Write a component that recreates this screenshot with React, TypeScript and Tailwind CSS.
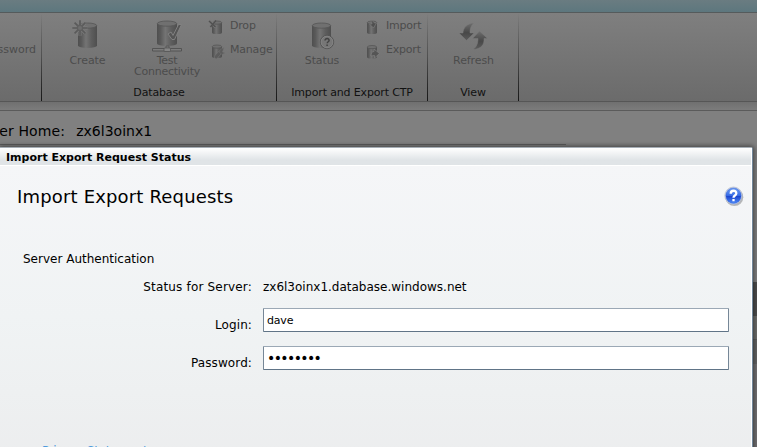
import React from "react";

type IconProps = { className?: string };

function IconGradients() {
  return (
    <svg width="0" height="0" className="absolute">
      <defs>
        <linearGradient id="disk" x1="0" x2="1" y1="0" y2="0">
          <stop offset="0" stopColor="#4f4f4f" />
          <stop offset="0.18" stopColor="#5a5a5a" />
          <stop offset="0.42" stopColor="#747474" />
          <stop offset="0.7" stopColor="#5e5e5e" />
          <stop offset="1" stopColor="#4f4f4f" />
        </linearGradient>
        <linearGradient id="arrow" x1="0" x2="0" y1="0" y2="1">
          <stop offset="0" stopColor="#6e6e6e" />
          <stop offset="0.55" stopColor="#484848" />
          <stop offset="1" stopColor="#5c5c5c" />
        </linearGradient>
        <linearGradient id="help" x1="0" x2="0" y1="0" y2="1">
          <stop offset="0" stopColor="#6c9cf2" />
          <stop offset="0.48" stopColor="#3a6ee6" />
          <stop offset="0.55" stopColor="#1c46cf" />
          <stop offset="1" stopColor="#4f8cf8" />
        </linearGradient>
      </defs>
    </svg>
  );
}

function Disk({ x, y, w, h, r }: { x: number; y: number; w: number; h: number; r: number }) {
  const rx = w / 2;
  return (
    <g>
      <path
        d={`M${x} ${y + r}v${h - 2 * r}a${rx} ${r} 0 0 0 ${w} 0v${-(h - 2 * r)}z`}
        fill="url(#disk)"
      />
      <ellipse cx={x + rx} cy={y + r} rx={rx - 0.3} ry={r} fill="#707070" stroke="#565656" strokeWidth="0.8" />
    </g>
  );
}

function CreateIcon({ className }: IconProps) {
  return (
    <svg className={className} width="32" height="32" viewBox="0 0 32 32">
      <Disk x={6} y={3} w={19} h={25} r={2.6} />
      <path d="M8 .3v15.400M.3 8h15.400M2.600 2.600l10.800 10.800M13.400 2.600L2.600 13.400" stroke="#7e7e7e" strokeWidth="3" fill="none" />
      <path d="M8 .3v15.400M.3 8h15.400M2.600 2.600l10.800 10.800M13.400 2.600L2.600 13.400" stroke="#5a5a5a" strokeWidth="1.700" fill="none" />
      <circle cx="8" cy="8" r="3.400" fill="#5f5f5f" />
      <circle cx="8" cy="8" r="2" fill="#6e6e6e" />
    </svg>
  );
}

function TestIcon({ className }: IconProps) {
  return (
    <svg className={className} width="32" height="34" viewBox="0 0 32 34">
      <Disk x={6} y={2} w={20} h={25} r={2.6} />
      <path d="M15 27h3v3h-3z" fill="#777" stroke="#505050" strokeWidth="0.7" />
      <path d="M1.500 29.500h29v2.500h-29z" fill="#7c7c7c" stroke="#505050" strokeWidth="0.9" />
      <rect x="13" y="29" width="6.500" height="3.500" rx="1" fill="#858585" stroke="#505050" strokeWidth="0.7" />
      <path d="M17 15l3-2 2 3.500L27.500 5.500h3L23.500 20.500h-2.500z" fill="#555" stroke="#858585" strokeWidth="0.9" />
    </svg>
  );
}

function StatusIcon({ className }: IconProps) {
  return (
    <svg className={className} width="32" height="32" viewBox="0 0 32 32">
      <Disk x={6} y={3} w={19} h={25} r={2.6} />
      <circle cx="21" cy="22" r="6.700" fill="#777" stroke="#4e4e4e" strokeWidth="0.8" />
      <circle cx="21" cy="22" r="5.800" fill="none" stroke="#858585" strokeWidth="0.8" />
      <path d="M19 20.600c0-2.800 4.300-2.600 4.100-.1-.1 1.300-1.900 1.300-1.900 2.800M21.100 24.500v1.400" fill="none" stroke="#424242" strokeWidth="1.500" />
    </svg>
  );
}

function RefreshIcon({ className }: IconProps) {
  return (
    <svg className={className} width="32" height="32" viewBox="0 0 32 32">
      <path d="M16 3C9 3.500 5 8 5 13H1L8.500 20.500 16 13H12C12 9 12.500 6 16 3z" fill="url(#arrow)" stroke="#7d7d7d" strokeWidth="0.500" />
      <path d="M15 29.500C23 29 26.500 25 26 18.500H29.500L21.500 11 14.500 18.500H20C20 23 19 26.500 15 29.500z" fill="url(#arrow)" stroke="#7d7d7d" strokeWidth="0.500" />
    </svg>
  );
}

type SmallKind = "drop" | "manage" | "import" | "export";

function SmallIcon({ kind }: { kind: SmallKind }) {
  return (
    <svg className="shrink-0 overflow-visible" width="16" height="16" viewBox="0 0 16 16">
      {kind === "drop" && (
        <>
          <Disk x={4} y={1} w={10} h={13} r={1.6} />
          <path d="M1.500 .5l6 7M7.500 .5L2 7" stroke="#787878" strokeWidth="2.400" fill="none" />
          <path d="M1 1l6.500 6M8 .5L2.500 7" stroke="#505050" strokeWidth="1.400" fill="none" />
        </>
      )}
      {kind === "manage" && (
        <>
          <Disk x={4} y={1} w={10} h={13} r={1.6} />
          <path d="M12 8.500L8 13" stroke="#747474" strokeWidth="4" strokeLinecap="round" fill="none" />
          <path d="M12 8.500L8 13" stroke="#5c5c5c" strokeWidth="3" strokeLinecap="round" fill="none" />
          <path d="M16 3.500l-4 2-.5 3 2.500 2 3-1.500-2.500-1z" fill="#5c5c5c" stroke="#747474" strokeWidth="0.500" />
        </>
      )}
      {kind === "import" && (
        <>
          <Disk x={3} y={1} w={10} h={13} r={1.600} />
          <path d="M4 0c3 0 4 2 4 4H5.500l4 4 3-5h-2C10 1.500 7-.5 4 0z" fill="#505050" stroke="#828282" strokeWidth="0.600" />
        </>
      )}
      {kind === "export" && (
        <>
          <Disk x={3} y={1.500} w={10} h={13} r={1.600} />
          <path d="M7 12c0-3 1-4.500 3-4.500V5l5.500 4.500-5 4.500v-2.500C9 11.500 8 12 7 12z" fill="#555" stroke="#828282" strokeWidth="0.700" />
        </>
      )}
    </svg>
  );
}

function HelpIcon() {
  return (
    <svg width="20" height="21" viewBox="0 0 20 21">
      <circle cx="10.400" cy="11.200" r="8.900" fill="#9b9c9e" opacity="0.700" />
      <circle cx="9.500" cy="9.700" r="8.700" fill="#dce4f4" stroke="#9ba3b4" strokeWidth="0.500" />
      <circle cx="9.500" cy="9.700" r="7.700" fill="url(#help)" stroke="#3560d4" strokeWidth="0.500" />
      <path d="M6.700 7.800c0-4.100 5.800-3.900 5.600-.3-.1 2.100-2.800 2-2.800 4.200M9.500 13v2.300" fill="none" stroke="#fff" strokeWidth="2.300" />
    </svg>
  );
}

function Separator() {
  return <div className="h-[88px] w-px shrink-0 bg-linear-to-b from-transparent via-[#505050] to-[#171717]" />;
}

function GroupLabel({ children }: { children: React.ReactNode }) {
  return <div className="h-4 text-center text-[11px] leading-4 tracking-[-0.15px] text-[#111]">{children}</div>;
}

function SmallCommand({ kind, label }: { kind: SmallKind; label: string }) {
  return (
    <div className="flex h-6 items-start gap-[6px]">
      <SmallIcon kind={kind} />
      <span className="-mt-[2px] leading-4 tracking-[-0.2px]">{label}</span>
    </div>
  );
}

function Ribbon() {
  return (
    <div className="flex h-[89px] border-b border-[#565656] bg-linear-to-b from-[#7f7f7f] to-[#6b6b6b] text-[11px] whitespace-nowrap text-[#4c4c4c]">
      <div className="flex w-[41px] shrink-0 justify-end pt-7 pr-[5px] leading-[18px]">Password</div>
      <Separator />
      <div className="flex w-[234px] flex-col">
        <div className="flex h-[72px] pt-[7px]">
          <div className="ml-[25px] flex w-[41px] flex-col items-center">
            <CreateIcon />
            <span className="mt-px leading-4 tracking-[-0.1px]">Create</span>
          </div>
          <div className="ml-[26px] flex w-[66px] flex-col items-center">
            <TestIcon className="-mt-px" />
            <span className="mt-[2px] text-center leading-[11px] tracking-[-0.25px]">
              <span className="block">Test</span>
              <span className="block">Connectivity</span>
            </span>
          </div>
          <div className="ml-[8px] flex flex-col">
            <SmallCommand kind="drop" label="Drop" />
            <SmallCommand kind="manage" label="Manage" />
          </div>
        </div>
        <GroupLabel>Database</GroupLabel>
      </div>
      <Separator />
      <div className="flex w-[150px] flex-col">
        <div className="flex h-[72px] pt-[7px]">
          <div className="ml-[25px] flex w-[40px] flex-col items-center">
            <StatusIcon />
            <span className="mt-px leading-4 tracking-[-0.1px]">Status</span>
          </div>
          <div className="ml-[22px] flex flex-col">
            <SmallCommand kind="import" label="Import" />
            <SmallCommand kind="export" label="Export" />
          </div>
        </div>
        <GroupLabel>Import and Export CTP</GroupLabel>
      </div>
      <Separator />
      <div className="flex w-[90px] flex-col">
        <div className="flex h-[72px] flex-col items-center pt-[7px] pl-px">
          <RefreshIcon />
          <span className="mt-px leading-4 tracking-[-0.1px]">Refresh</span>
        </div>
        <GroupLabel>View</GroupLabel>
      </div>
      <Separator />
    </div>
  );
}

function Field({ label, type, value }: { label: string; type: string; value: string }) {
  return (
    <div className="mb-[13px] flex h-[25px] items-start">
      <label className="w-[252px] pt-[9px] text-right leading-4 tracking-[0.1px]">{label}</label>
      <input
        type={type}
        defaultValue={value}
        className={
          "ml-[11px] h-6 w-[466px] rounded-[1px] border border-t-[#9ba8b5] border-r-[#768797] border-b-[#607487] border-l-[#768797] bg-white px-[3px] leading-4 text-black outline-none " +
          (type === "password" ? "text-[14px] tracking-[-1.6px]" : "text-[11px] tracking-[-0.2px]")
        }
      />
    </div>
  );
}

function Dialog() {
  return (
    <section className="absolute top-[147px] left-0 h-[320px] w-[753px] rounded-tr-[2px] border-t border-r border-t-[#a5adb5] border-r-[#71879b] bg-[#eff1f3] shadow-[0_0_5px_1px_rgba(0,0,0,0.5)]">
      <div className="h-full border-r border-white">
        <header className="h-[17px] bg-linear-to-b from-white to-[#e0e4e7] to-70% pl-[6px] text-[11px] leading-[20px] font-bold text-black">
          Import Export Request Status
        </header>
        <div className="h-[303px] border-t border-white bg-linear-to-b from-[#f5f6f8] via-[#f0f3f4] to-[#ecedee] text-[12px] text-black">
          <div className="flex h-[83px] justify-between pt-[20px] pr-[7px] pl-[17px]">
            <h1 className="-mt-px text-[18px] leading-6 tracking-[0.17px]">Import Export Requests</h1>
            <HelpIcon />
          </div>
          <div className="pl-[23px] leading-5">Server Authentication</div>
          <div className="mt-[8px] flex h-[31px] leading-5">
            <span className="w-[252px] text-right tracking-[0.18px]">Status for Server:</span>
            <span className="ml-[11px]">zx6l3oinx1.database.windows.net</span>
          </div>
          <Field label="Login:" type="text" value="dave" />
          <Field label="Password:" type="password" value="password" />
          <a className="mt-[72px] block pl-[42px] leading-4 tracking-[-0.3px] text-[#4f9bdc]">Privacy Statement</a>
        </div>
      </div>
    </section>
  );
}

export default function App() {
  return (
    <main className="relative flex h-[447px] w-[757px] flex-col overflow-hidden bg-[#808080] font-['DejaVu_Sans',sans-serif]">
      <IconGradients />
      <div className="h-[13px] shrink-0 border-b border-[#555b5c] bg-linear-to-b from-[#6a7c81] to-[#5d777e]" />
      <Ribbon />
      <div className="h-[9px] shrink-0 border-b border-[#5b5b5b] bg-linear-to-b from-[#707070] to-[#7c7c7c]" />
      <div className="h-[34px] w-[566px] shrink-0 border-b border-[#5e5e5e]">
        <div className="-ml-[33px] flex gap-[11px] pt-[10px] text-[14px] leading-5 text-black">
          <span className="tracking-[0.15px]">Server Home:</span>
          <span>zx6l3oinx1</span>
        </div>
      </div>
      <div className="mt-[137px] h-[34px] shrink-0 bg-[#4e4e4e]" />
      <div className="h-[24px] shrink-0 border-b border-[#5b5b5b] bg-[#6d6d6b]" />
      <div className="h-[24px] shrink-0 bg-[#656565]" />
      <div className="flex-1 bg-[#737173]" />
      <Dialog />
    </main>
  );
}
